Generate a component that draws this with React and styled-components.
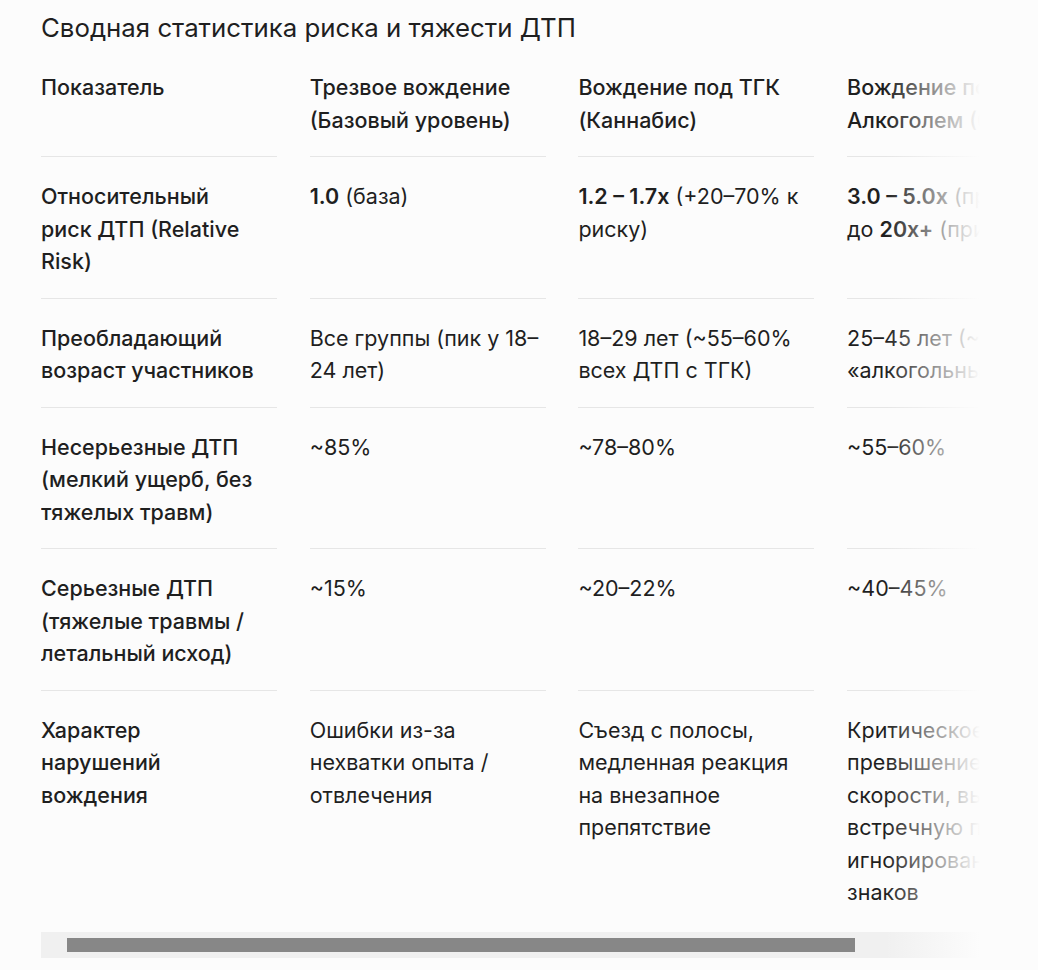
import React from 'react'
import styled, { createGlobalStyle } from 'styled-components'

const columns = [
  'Показатель',
  'Трезвое вождение (Базовый уровень)',
  'Вождение под ТГК (Каннабис)',
  'Вождение под Алкоголем (0.5‰+)',
]

const rows = [
  {
    label: 'Относительный риск ДТП (Relative Risk)',
    cells: [
      <><b>1.0</b> (база)</>,
      <><b>1.2 – 1.7x</b> (+20–70% к риску)</>,
      <><b>3.0 – 5.0x</b> (при 0.5‰) до <b>20x+</b> (при &gt;1.5‰)</>,
    ],
  },
  {
    label: 'Преобладающий возраст участников',
    cells: [
      'Все группы (пик у 18–24 лет)',
      '18–29 лет (~55–60% всех ДТП с ТГК)',
      '25–45 лет (~65% «алкогольных» ДТП)',
    ],
  },
  {
    label: 'Несерьезные ДТП (мелкий ущерб, без тяжелых травм)',
    cells: ['~85%', '~78–80%', '~55–60%'],
  },
  {
    label: 'Серьезные ДТП (тяжелые травмы / летальный исход)',
    cells: ['~15%', '~20–22%', '~40–45%'],
  },
  {
    label: 'Характер нарушений вождения',
    cells: [
      'Ошибки из-за нехватки опыта / отвлечения',
      'Съезд с полосы, медленная реакция на внезапное препятствие',
      'Критическое превышение скорости, выезд на встречную полосу, игнорирование знаков',
    ],
  },
]

function App() {
  return (
    <>
      <GlobalStyle />
      <Page>
        <Title>Сводная статистика риска и тяжести ДТП</Title>
        <TableFrame>
          <Scroller>
            <Row>
              {columns.map((c, j) => (
                <Cell key={c} $head $first={j === 0}>{c}</Cell>
              ))}
            </Row>
            {rows.map((r, i) => (
              <Row key={r.label}>
                <Cell $head $first $last={i === rows.length - 1}>{r.label}</Cell>
                {r.cells.map((c, j) => (
                  <Cell key={j} $last={i === rows.length - 1}>{c}</Cell>
                ))}
              </Row>
            ))}
          </Scroller>
          <ScrollTrack>
            <ScrollThumb />
          </ScrollTrack>
          <Fade />
        </TableFrame>
      </Page>
    </>
  )
}

const GlobalStyle = createGlobalStyle`
  body {
    margin: 0;
    background: #fcfcfc;
    font-family: Inter, "Noto Sans", sans-serif;
    color: #1f1f1f;
  }
`

const Page = styled.div`
  padding: 11px 0 0 41px;
`

const Title = styled.h2`
  margin: 0 0 3px;
  font-size: 25.8px;
  line-height: 34px;
  font-weight: 400;
  color: #1f1f1f;
`

const TableFrame = styled.div`
  position: relative;
  width: 944px;
`

const Scroller = styled.div`
  overflow: hidden;
`

const Row = styled.div`
  display: grid;
  grid-template-columns: repeat(4, 236px);
  column-gap: 32.7px;
  width: max-content;
`

const Cell = styled.div`
  padding: 23px ${(p) => (p.$first ? '18px' : '0')} ${(p) => (p.$last ? '23px' : '20px')} 0;
  font-size: 21.5px;
  line-height: 32.5px;
  font-weight: ${(p) => (p.$head ? 500 : 400)};
  border-bottom: ${(p) => (p.$last ? 'none' : '1px solid #e6e6e6')};

  b {
    font-weight: 600;
  }
`

const ScrollTrack = styled.div`
  height: 26px;
  background: #f0f0f0;
  padding: 6px 0;
  box-sizing: border-box;
  margin-right: 2px;
`

const ScrollThumb = styled.div`
  margin-left: 26px;
  width: 788px;
  height: 14px;
  background: #878787;
`

const Fade = styled.div`
  position: absolute;
  top: 0;
  right: 0;
  bottom: 0;
  width: 100px;
  background: linear-gradient(to right, rgba(252, 252, 252, 0), #fcfcfc 95%);
  pointer-events: none;
`

export default App
